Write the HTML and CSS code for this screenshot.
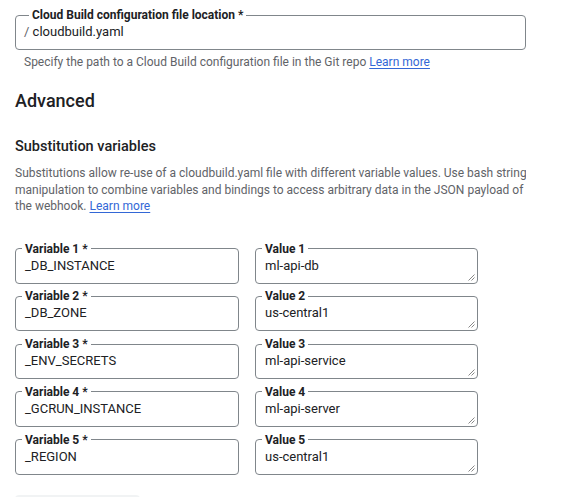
FILE: index.html
```html
<!DOCTYPE html>
<html>
<head>
<meta charset="utf-8">
<link rel="stylesheet" href="styles.css">
</head>
<body>
<div class="page">
  <fieldset class="field field-main">
    <legend class="field-label">Cloud Build configuration file location *</legend>
    <div class="field-value main-value"><span class="prefix">/</span> cloudbuild.yaml</div>
  </fieldset>
  <p class="helper">Specify the path to a Cloud Build configuration file in the Git repo <a class="link" href="#">Learn more</a></p>

  <h2 class="section-title">Advanced</h2>
  <h3 class="sub-title">Substitution variables</h3>
  <p class="desc">Substitutions allow re-use of a cloudbuild.yaml file with different variable values. Use bash string manipulation to combine variables and bindings to access arbitrary data in the JSON payload of the webhook. <a class="link" href="#">Learn more</a></p>

  <div class="vars">
    <fieldset class="field"><legend class="field-label">Variable 1 *</legend><div class="field-value">_DB_INSTANCE</div></fieldset>
    <fieldset class="field area"><legend class="field-label">Value 1</legend><div class="field-value">ml-api-db</div><svg class="grip" width="8" height="8" viewBox="0 0 8 8"><path d="M7.5 1.5L1.5 7.5M7.5 4.5L4.5 7.5" stroke="#888" stroke-width="1"/></svg></fieldset>

    <fieldset class="field"><legend class="field-label">Variable 2 *</legend><div class="field-value">_DB_ZONE</div></fieldset>
    <fieldset class="field area"><legend class="field-label">Value 2</legend><div class="field-value">us-central1</div><svg class="grip" width="8" height="8" viewBox="0 0 8 8"><path d="M7.5 1.5L1.5 7.5M7.5 4.5L4.5 7.5" stroke="#888" stroke-width="1"/></svg></fieldset>

    <fieldset class="field"><legend class="field-label">Variable 3 *</legend><div class="field-value">_ENV_SECRETS</div></fieldset>
    <fieldset class="field area"><legend class="field-label">Value 3</legend><div class="field-value">ml-api-service</div><svg class="grip" width="8" height="8" viewBox="0 0 8 8"><path d="M7.5 1.5L1.5 7.5M7.5 4.5L4.5 7.5" stroke="#888" stroke-width="1"/></svg></fieldset>

    <fieldset class="field"><legend class="field-label">Variable 4 *</legend><div class="field-value">_GCRUN_INSTANCE</div></fieldset>
    <fieldset class="field area"><legend class="field-label">Value 4</legend><div class="field-value">ml-api-server</div><svg class="grip" width="8" height="8" viewBox="0 0 8 8"><path d="M7.5 1.5L1.5 7.5M7.5 4.5L4.5 7.5" stroke="#888" stroke-width="1"/></svg></fieldset>

    <fieldset class="field"><legend class="field-label">Variable 5 *</legend><div class="field-value">_REGION</div></fieldset>
    <fieldset class="field area"><legend class="field-label">Value 5</legend><div class="field-value">us-central1</div><svg class="grip" width="8" height="8" viewBox="0 0 8 8"><path d="M7.5 1.5L1.5 7.5M7.5 4.5L4.5 7.5" stroke="#888" stroke-width="1"/></svg></fieldset>
  </div>

  <div class="add-btn"></div>
</div>
</body>
</html>
```
FILE: styles.css
```css
html, body {
  margin: 0;
  padding: 0;
  background: #ffffff;
}
body {
  font-family: Roboto, "Liberation Sans", Arial, sans-serif;
  color: #202124;
  overflow: hidden;
}
.page {
  padding: 8px 0 0 15px;
  width: 511px;
  height: 489px;
  overflow: hidden;
}
.field {
  margin: 0;
  padding: 0;
  border: 1px solid #80868b;
  border-radius: 4px;
  min-width: 0;
  position: relative;
}
.field-label {
  font-size: 12px;
  line-height: 14px;
  font-weight: 700;
  padding: 0 3px;
  margin-left: 6px;
  color: #202124;
}
.field-main .field-label {
  margin-left: 13px;
}
.field-value {
  font-size: 13px;
  line-height: 16px;
  padding: 2px 4px 9px 9px;
  white-space: nowrap;
}
.main-value {
  padding-left: 8px;
}
.prefix {
  color: #5f6368;
}
.helper {
  margin: 4px 0 0 9px;
  font-size: 12px;
  line-height: 16px;
  color: #5f6368;
}
.link {
  color: #3367d6;
  text-decoration: underline;
  text-underline-offset: 2px;
}
.section-title {
  margin: 19px 0 0 0;
  font-size: 18px;
  line-height: 24px;
  font-weight: 500;
}
.sub-title {
  margin: 24px 0 0 0;
  font-size: 14.5px;
  line-height: 20px;
  font-weight: 500;
}
.desc {
  margin: 8px -8px 0 0;
  font-size: 12px;
  line-height: 16.5px;
  color: #5f6368;
}
.vars {
  margin-top: 27px;
  display: grid;
  grid-template-columns: 224px 223px;
  column-gap: 16px;
  row-gap: 5.75px;
}
.grip {
  position: absolute;
  right: 2px;
  bottom: 2px;
}
.add-btn {
  margin-top: 20px;
  width: 125px;
  height: 36px;
  border-radius: 4px;
  background: #f1f3f4;
}
```
